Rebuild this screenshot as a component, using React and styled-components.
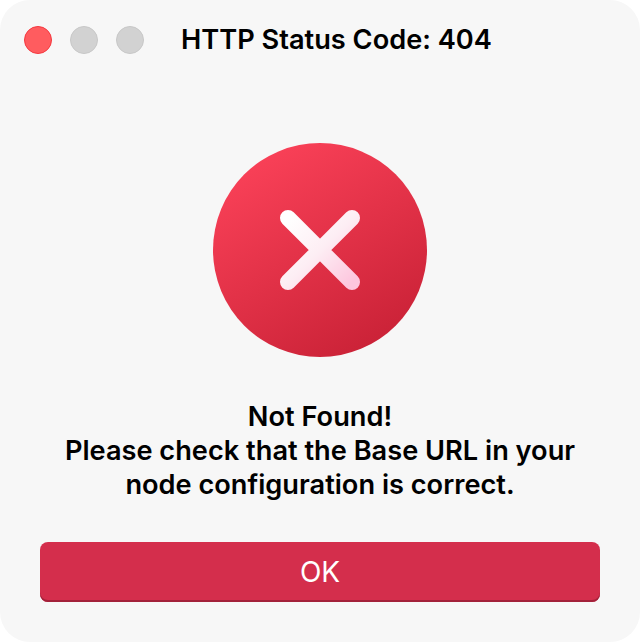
import React from 'react'
import styled, { createGlobalStyle } from 'styled-components'

const GlobalStyle = createGlobalStyle`
  html, body {
    background: #ffffff;
    margin: 0;
    padding: 0;
  }
`

const Dialog = styled.div`
  background: #f7f7f7;
  border-radius: 30px;
  box-sizing: border-box;
  color: #000000;
  display: flex;
  flex-direction: column;
  font-family: Inter, "Liberation Sans", sans-serif;
  height: 642px;
  padding: 26px 40px 40px;
  width: 640px;
`

const TitleBar = styled.header`
  align-items: center;
  display: flex;
  height: 28px;
  margin-left: -16px;
`

const Lights = styled.div`
  display: flex;
  gap: 18px;
`

const Light = styled.span`
  background: ${props => (props.$active ? '#ff5c5f' : '#d2d2d2')};
  border: 1px solid ${props => (props.$active ? '#f5383f' : '#c8c8c8')};
  border-radius: 50%;
  box-sizing: border-box;
  display: block;
  height: 28px;
  width: 28px;
`

const Title = styled.h1`
  font-size: 27.2px;
  font-weight: 600;
  line-height: 28px;
  margin: 0 0 0 37px;
  white-space: nowrap;
`

const IconWrap = styled.div`
  display: flex;
  justify-content: center;
  margin-top: 89px;
`

const Message = styled.p`
  font-size: 27.2px;
  font-weight: 600;
  line-height: 34px;
  margin: 43px -10px 0;
  text-align: center;
  white-space: nowrap;
`

const OkButton = styled.button`
  background: #d42e4c;
  border: 0;
  border-radius: 8px;
  box-shadow: inset 0 -2px 0 #a3213a;
  color: #ffffff;
  font-family: inherit;
  font-size: 28px;
  font-weight: 400;
  height: 60px;
  margin-top: auto;
  padding: 0;
  width: 560px;
`

const ErrorIcon = () => (
  <svg width="214" height="214" viewBox="0 0 214 214">
    <defs>
      <linearGradient id="disc" x1="0.2" y1="0.05" x2="0.75" y2="0.97">
        <stop offset="0" stopColor="#fa4158" />
        <stop offset="1" stopColor="#ca2237" />
      </linearGradient>
      <linearGradient id="cross" gradientUnits="userSpaceOnUse" x1="75" y1="75" x2="139" y2="139">
        <stop offset="0" stopColor="#ffffff" />
        <stop offset="0.5" stopColor="#fdeef4" />
        <stop offset="1" stopColor="#fdc6de" />
      </linearGradient>
    </defs>
    <circle cx="107" cy="107" r="107" fill="url(#disc)" />
    <path
      d="M75 75 L139 139 M139 75 L75 139"
      fill="none"
      stroke="url(#cross)"
      strokeLinecap="round"
      strokeWidth="16"
    />
  </svg>
)

const App = () => (
  <>
    <GlobalStyle />
    <Dialog>
      <TitleBar>
        <Lights>
          <Light $active />
          <Light />
          <Light />
        </Lights>
        <Title>HTTP Status Code: 404</Title>
      </TitleBar>
      <IconWrap>
        <ErrorIcon />
      </IconWrap>
      <Message>
        Not Found!
        <br />
        Please check that the Base URL in your
        <br />
        node configuration is correct.
      </Message>
      <OkButton>OK</OkButton>
    </Dialog>
  </>
)

export default App
